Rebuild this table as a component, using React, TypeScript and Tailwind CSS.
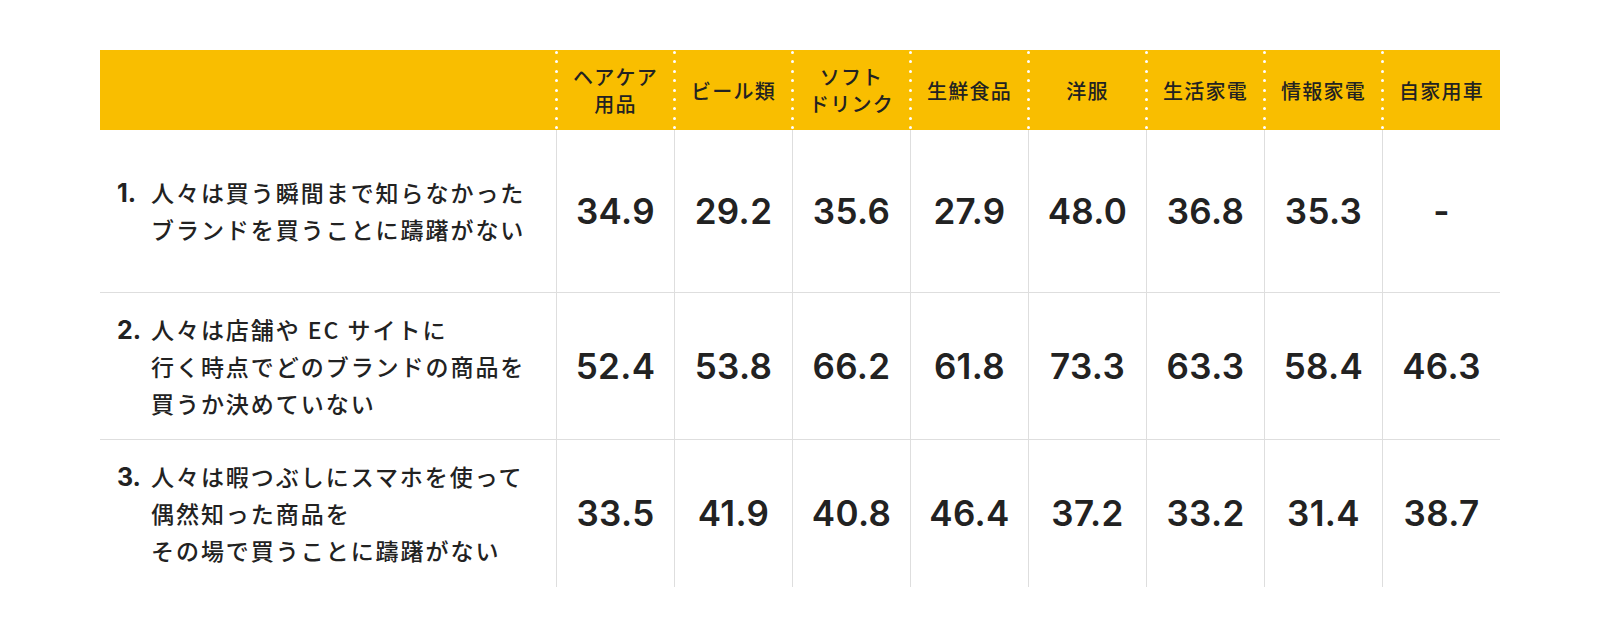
import React from "react";

const jp = "font-['Noto_Sans_CJK_JP','Noto_Sans',sans-serif]";
const num = "font-['Inter','Noto_Sans_CJK_JP',sans-serif]";

const headers: string[][] = [
  ["ヘアケア", "用品"],
  ["ビール類"],
  ["ソフト", "ドリンク"],
  ["生鮮食品"],
  ["洋服"],
  ["生活家電"],
  ["情報家電"],
  ["自家用車"],
];

interface Row {
  no: string;
  lines: string[];
  values: string[];
  height: string;
  last?: boolean;
}

const rows: Row[] = [
  {
    no: "1.",
    lines: ["人々は買う瞬間まで知らなかった", "ブランドを買うことに躊躇がない"],
    values: ["34.9", "29.2", "35.6", "27.9", "48.0", "36.8", "35.3", "-"],
    height: "h-[163px]",
  },
  {
    no: "2.",
    lines: ["人々は店舗や EC サイトに", "行く時点でどのブランドの商品を", "買うか決めていない"],
    values: ["52.4", "53.8", "66.2", "61.8", "73.3", "63.3", "58.4", "46.3"],
    height: "h-[147px]",
  },
  {
    no: "3.",
    lines: ["人々は暇つぶしにスマホを使って", "偶然知った商品を", "その場で買うことに躊躇がない"],
    values: ["33.5", "41.9", "40.8", "46.4", "37.2", "33.2", "31.4", "38.7"],
    height: "h-[147px]",
    last: true,
  },
];

// white dotted divider on the left edge of a header cell
const Dots = () => (
  <div className="absolute top-0 bottom-0 left-[-1.5px] w-[3px] flex flex-col justify-between py-[1px]">
    {Array.from({ length: 9 }).map((_, i) => (
      <span key={i} className="block w-[3px] h-[3px] rounded-full bg-white" />
    ))}
  </div>
);

export default function App() {
  return (
    <div className="w-[1600px] h-[637px] bg-white pt-[50px]">
      <div className="w-[1400px] mx-auto text-[#222]">
        {/* header */}
        <div className="grid grid-cols-[456px_repeat(8,1fr)] h-[80px] bg-[#f9be00]">
          <div />
          {headers.map((h, i) => (
            <div
              key={i}
              className={`relative flex flex-col items-center justify-center text-center ${jp} text-[20px] leading-[27px] tracking-[0.06em] pl-[1px] font-medium`}
            >
              <Dots />
              {h.map((l) => (
                <span key={l}>{l}</span>
              ))}
            </div>
          ))}
        </div>

        {/* body */}
        {rows.map((r) => (
          <div
            key={r.no}
            className={`grid grid-cols-[456px_repeat(8,1fr)] ${r.height} ${
              r.last ? "" : "border-b border-[#dedede]"
            }`}
          >
            <div className="flex items-center pl-[17px]">
              <div className="flex items-baseline">
                <div className={`${num} font-bold text-[25px] w-[34px] shrink-0`}>{r.no}</div>
                <div className={`${jp} font-medium text-[23px] leading-[37px] tracking-[0.085em]`}>
                  {r.lines.map((l) => (
                    <div key={l}>{l}</div>
                  ))}
                </div>
              </div>
            </div>
            {r.values.map((v, i) => (
              <div
                key={i}
                className={`flex items-center justify-center border-l border-[#dedede] ${num} font-semibold text-[35px] tracking-[0.01em]`}
              >
                {v}
              </div>
            ))}
          </div>
        ))}
      </div>
    </div>
  );
}
